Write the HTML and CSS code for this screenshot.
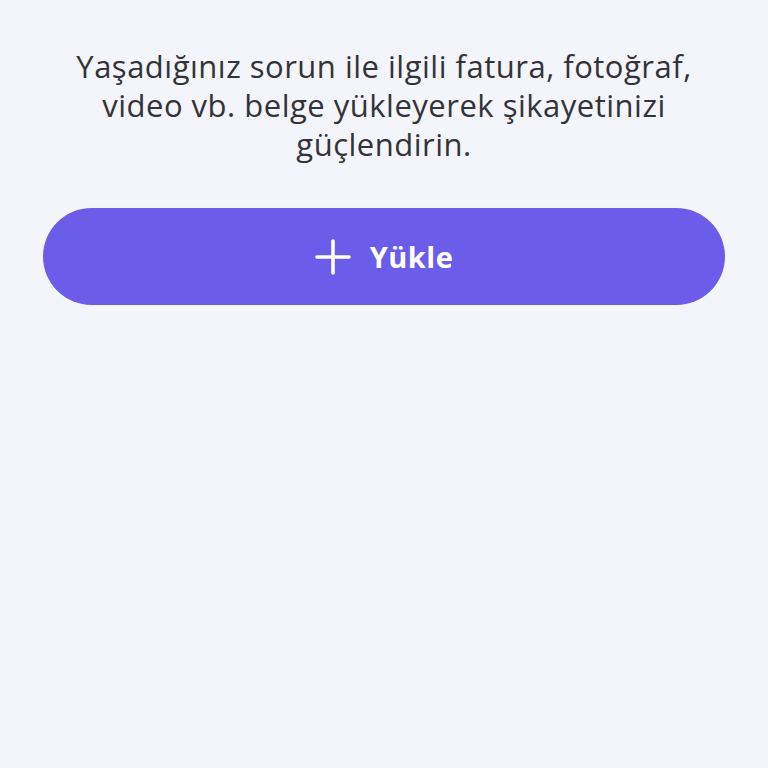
FILE: index.html
```html
<!DOCTYPE html>
<html lang="tr">
<head>
    <meta charset="UTF-8">
    <meta name="viewport" content="width=device-width, initial-scale=1.0">
    <title>Belge Yükle</title>
    <link rel="stylesheet" href="styles.css">
</head>
<body>
    <main class="upload">
        <p class="upload-text">Yaşadığınız sorun ile ilgili fatura, fotoğraf, video vb. belge yükleyerek şikayetinizi güçlendirin.</p>
        <button class="upload-button" type="button">
            <svg class="plus" viewBox="0 0 36 36" width="36" height="36">
                <path d="M18 2v32M2 18h32" stroke="#fff" stroke-width="3.6" stroke-linecap="round" fill="none"/>
            </svg>
            <span>Yükle</span>
        </button>
    </main>
</body>
</html>
```

FILE: styles.css
```css
/* Reset */
body, p, button {
    margin: 0;
    padding: 0;
    box-sizing: border-box;
}

body {
    font-family: "Open Sans", Lato, sans-serif;
    background-color: #f4f5fa;
    color: #333;
    height: 768px;
}

.upload {
    padding: 47px 43px 0;
}

.upload-text {
    font-size: 31px;
    line-height: 39px;
    letter-spacing: 0.5px;
    text-align: center;
    color: #333338;
    padding: 0 10px;
}

.upload-button {
    display: flex;
    align-items: center;
    justify-content: center;
    gap: 19px;
    width: 100%;
    height: 97px;
    margin-top: 44px;
    border: none;
    border-radius: 49px;
    background: #6b5de9;
    color: #fff;
    font-family: inherit;
    font-size: 29px;
    font-weight: 700;
    letter-spacing: 0.5px;
    cursor: pointer;
}

.plus {
    display: block;
}
```
